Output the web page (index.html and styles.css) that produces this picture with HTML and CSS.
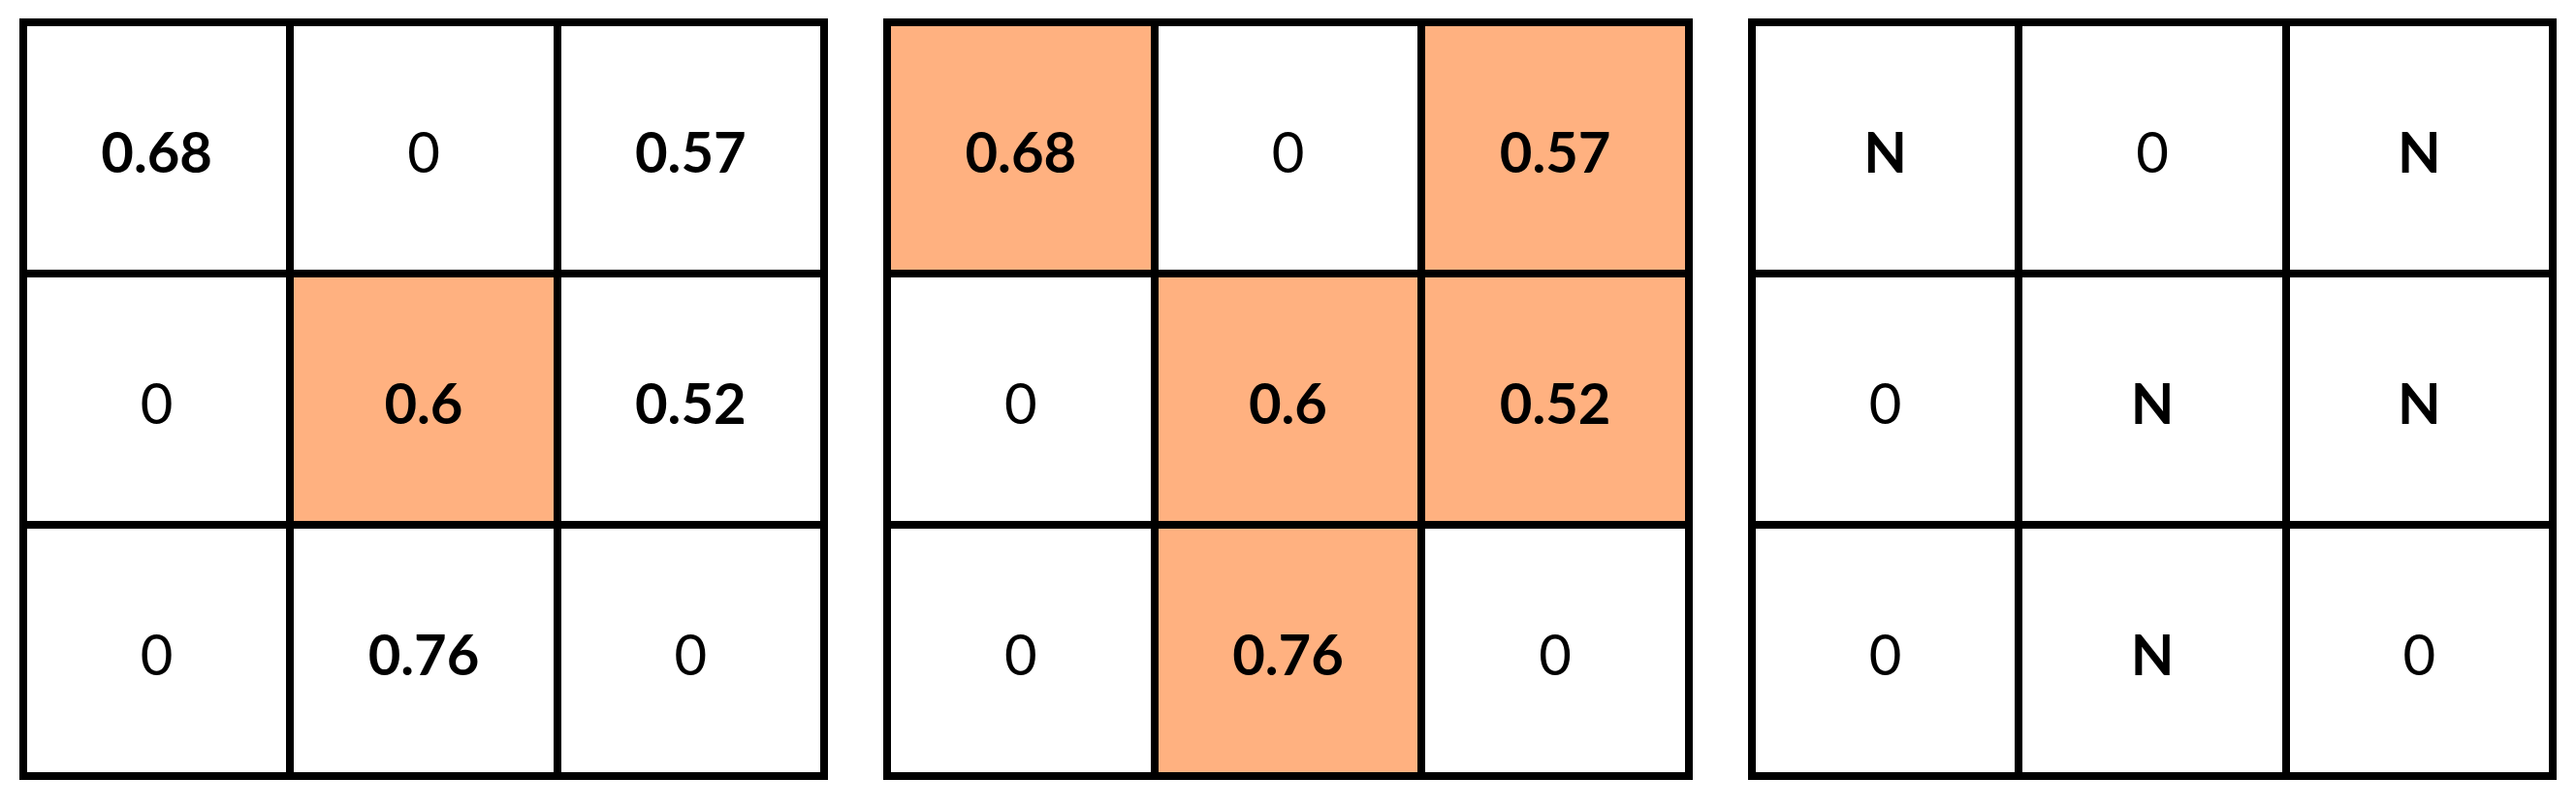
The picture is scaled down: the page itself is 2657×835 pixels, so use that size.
FILE: index.html
```html
<!DOCTYPE html>
<html lang="en">
<head>
    <meta charset="UTF-8">
    <title>Neighbourhood grids</title>
    <link rel="stylesheet" href="styles.css">
</head>
<body>
    <div class="panels">
        <div class="grid">
            <div class="cell strong">0.68</div>
            <div class="cell">0</div>
            <div class="cell strong">0.57</div>
            <div class="cell">0</div>
            <div class="cell strong hit">0.6</div>
            <div class="cell strong">0.52</div>
            <div class="cell">0</div>
            <div class="cell strong">0.76</div>
            <div class="cell">0</div>
        </div>

        <div class="grid wide">
            <div class="cell strong hit">0.68</div>
            <div class="cell">0</div>
            <div class="cell strong hit">0.57</div>
            <div class="cell">0</div>
            <div class="cell strong hit">0.6</div>
            <div class="cell strong hit">0.52</div>
            <div class="cell">0</div>
            <div class="cell strong hit">0.76</div>
            <div class="cell">0</div>
        </div>

        <div class="grid">
            <div class="cell strong">N</div>
            <div class="cell">0</div>
            <div class="cell strong">N</div>
            <div class="cell">0</div>
            <div class="cell strong">N</div>
            <div class="cell strong">N</div>
            <div class="cell">0</div>
            <div class="cell strong">N</div>
            <div class="cell">0</div>
        </div>
    </div>
</body>
</html>
```

FILE: styles.css
```css
* {
    margin: 0;
    padding: 0;
    box-sizing: border-box;
}

body {
    background-color: #ffffff;
    font-family: Lato, "Open Sans", "Liberation Sans", sans-serif;
    color: #000000;
}

.panels {
    display: flex;
    gap: 57px;
    padding: 19px 0 0 20px;
}

.grid {
    width: 834px;
    height: 785px;
    display: grid;
    grid-template-columns: repeat(3, 1fr);
    grid-template-rows: repeat(3, 1fr);
    gap: 8px;
    padding: 8px;
    background-color: #000000;
}

.grid.wide {
    width: 835px;
}

.cell {
    background-color: #ffffff;
    display: flex;
    align-items: center;
    justify-content: center;
    font-size: 58px;
    padding-top: 6px;
}

.cell.strong {
    font-weight: bold;
}

.cell.hit {
    background-color: #ffb180;
}
```
